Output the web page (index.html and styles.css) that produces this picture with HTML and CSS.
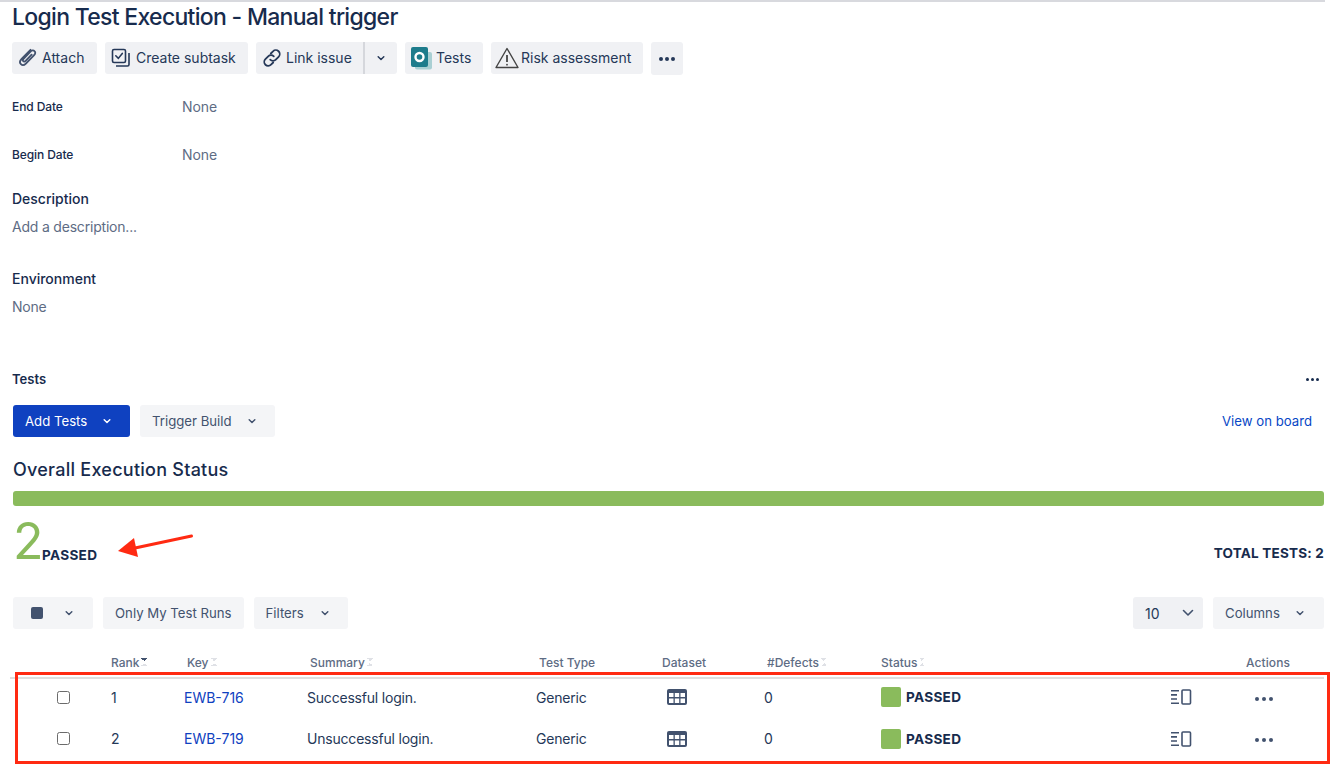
FILE: index.html
```html
<!DOCTYPE html>
<html lang="en">
<head>
<meta charset="UTF-8" />
<meta name="viewport" content="width=device-width, initial-scale=1" />
<title>Login Test Execution - Manual trigger</title>
<link rel="stylesheet" href="styles.css">
</head>
<body>
<div class="top-line"></div>
<main class="page">
  <h1 class="issue-title">Login Test Execution - Manual trigger</h1>

  <div class="toolbar">
    <a class="btn btn-attach">
      <svg class="icon" width="20" height="20" viewBox="0 0 20 20" fill="none" stroke="#42526e" stroke-width="1.8" stroke-linecap="round"><path d="M12.5 1.8 3.6 11c-1.8 1.8-2 3.9-.7 5.2 1.3 1.3 3.300 1.100 5-.6l8.200-8.400c1.400-1.400 1.500-3.100.4-4.100-1.100-1.100-2.700-.9-4 .4l-7 7.300c-.8.800-.9 1.800-.3 2.400.6.600 1.600.5 2.400-.3l6-6.200"/></svg>
      Attach
    </a>
    <a class="btn btn-subtask">
      <svg class="icon" width="20" height="20" viewBox="0 0 20 20" fill="none" stroke="#253858" stroke-width="1.6"><rect x="1.5" y="1.5" width="13" height="13" rx="1.5"/><path d="m4.8 7.800 2.500 2.600 4-5" stroke-linecap="round"/><path d="M18 5v11.500a1.500 1.500 0 0 1-1.500 1.500H5"/></svg>
      Create subtask
    </a>
    <div class="btn-split">
      <a class="btn btn-link">
        <svg class="icon" width="20" height="20" viewBox="0 0 20 20" fill="none" stroke="#253858" stroke-width="1.8" stroke-linecap="round"><path d="m8.8 5.500 2.200-2.200a3.900 3.900 0 0 1 5.600 5.500l-2.800 2.900a3.900 3.900 0 0 1-5.600 0"/><path d="m11.2 14.500-2.200 2.200a3.900 3.900 0 0 1-5.600-5.500l2.800-2.900a3.900 3.900 0 0 1 5.600 0"/></svg>
        Link issue
      </a>
      <a class="btn btn-caret">
        <svg width="10" height="10" viewBox="0 0 10 10" fill="none" stroke="#253858" stroke-width="1.5" stroke-linecap="round" stroke-linejoin="round"><path d="m2.2 3.800 2.800 2.700 2.800-2.700"/></svg>
      </a>
    </div>
    <a class="btn btn-tests">
      <svg class="icon" width="21" height="23" viewBox="0 0 21 23" fill="none"><rect x="4" y="5" width="17" height="17.5" rx="2" fill="#a9cfd3"/><rect x="0" y="0" width="17" height="20" rx="2" fill="#1d7c8c"/><circle cx="8.5" cy="10" r="4" fill="none" stroke="#fff" stroke-width="2.4"/></svg>
      Tests
    </a>
    <a class="btn btn-risk">
      <svg class="icon" width="26" height="24" viewBox="0 0 26 24" fill="none" stroke="#444" stroke-width="1.4" stroke-linejoin="round"><path d="M13 2.500 24 21.500H2z"/><path d="M13 9v7" stroke-width="1.8"/><circle cx="13" cy="18.7" r=".9" fill="#444" stroke="none"/></svg>
      Risk assessment
    </a>
    <a class="btn btn-more">
      <span class="dots"><i></i><i></i><i></i></span>
    </a>
  </div>

  <dl class="fields">
    <div class="field-row"><dt>End Date</dt><dd>None</dd></div>
    <div class="field-row"><dt>Begin Date</dt><dd>None</dd></div>
  </dl>

  <section class="text-block block-desc">
    <h2>Description</h2>
    <p>Add a description...</p>
  </section>
  <section class="text-block block-env">
    <h2>Environment</h2>
    <p>None</p>
  </section>

  <div class="tests-head">
    <h2>Tests</h2>
    <span class="dots dots-small"><i></i><i></i><i></i></span>
  </div>

  <div class="tests-actions">
    <a class="btn2 btn-primary">Add Tests
      <svg width="10" height="10" viewBox="0 0 10 10" fill="none" stroke="#fff" stroke-width="1.5" stroke-linecap="round" stroke-linejoin="round"><path d="m2.2 3.800 2.800 2.700 2.800-2.700"/></svg>
    </a>
    <a class="btn2 btn-trigger">Trigger Build
      <svg width="10" height="10" viewBox="0 0 10 10" fill="none" stroke="#42526e" stroke-width="1.5" stroke-linecap="round" stroke-linejoin="round"><path d="m2.2 3.800 2.800 2.700 2.800-2.700"/></svg>
    </a>
    <a class="board-link">View on board</a>
  </div>

  <h2 class="status-title">Overall Execution Status</h2>
  <div class="status-bar"></div>

  <div class="summary">
    <div class="summary-count">
      <span class="big-num">2</span>
      <span class="big-label">PASSED</span>
    </div>
    <span class="total">TOTAL TESTS: 2</span>
  </div>

  <div class="filters">
    <a class="btn2 btn-status">
      <span class="square"></span>
      <svg width="10" height="10" viewBox="0 0 10 10" fill="none" stroke="#42526e" stroke-width="1.5" stroke-linecap="round" stroke-linejoin="round"><path d="m2.2 3.800 2.800 2.700 2.800-2.700"/></svg>
    </a>
    <a class="btn2 btn-mine">Only My Test Runs</a>
    <a class="btn2 btn-filters">Filters
      <svg width="10" height="10" viewBox="0 0 10 10" fill="none" stroke="#42526e" stroke-width="1.5" stroke-linecap="round" stroke-linejoin="round"><path d="m2.2 3.800 2.800 2.700 2.800-2.700"/></svg>
    </a>
    <a class="btn2 btn-size">10
      <svg width="14" height="14" viewBox="0 0 14 14" fill="none" stroke="#42526e" stroke-width="1.6" stroke-linecap="round" stroke-linejoin="round"><path d="m2.5 4.500 4.500 4.500 4.500-4.500"/></svg>
    </a>
    <a class="btn2 btn-columns">Columns
      <svg width="10" height="10" viewBox="0 0 10 10" fill="none" stroke="#42526e" stroke-width="1.5" stroke-linecap="round" stroke-linejoin="round"><path d="m2.2 3.800 2.800 2.700 2.800-2.700"/></svg>
    </a>
  </div>

  <div class="runs">
    <div class="run-row run-head">
      <span class="c-check"></span>
      <span class="c-rank">Rank<i class="sort sort-on"></i></span>
      <span class="c-key">Key<i class="sort"></i></span>
      <span class="c-summary">Summary<i class="sort"></i></span>
      <span class="c-type">Test Type</span>
      <span class="c-data">Dataset</span>
      <span class="c-def">#Defects<i class="sort"></i></span>
      <span class="c-status">Status<i class="sort"></i></span>
      <span class="c-detail"></span>
      <span class="c-act">Actions</span>
    </div>
    <div class="run-row run-body run-first">
      <span class="c-check"><input type="checkbox" class="check"></span>
      <span class="c-rank">1</span>
      <span class="c-key"><a>EWB-716</a></span>
      <span class="c-summary">Successful login.</span>
      <span class="c-type">Generic</span>
      <span class="c-data">
        <svg width="22" height="18" viewBox="0 0 22 18"><rect x="1" y="1" width="20" height="16" rx="2" fill="#42526e"/><path d="M3 5h4.500v4H3zM8.800 5h4.400v4H8.800zM14.500 5H19v4h-4.500zM3 10.500h4.500V15H3zM8.800 10.500h4.400V15H8.800zM14.500 10.500H19V15h-4.500z" fill="#fff"/></svg>
      </span>
      <span class="c-def">0</span>
      <span class="c-status"><i class="status-box"></i><b>PASSED</b></span>
      <span class="c-detail">
        <svg width="22" height="16" viewBox="0 0 22 16" fill="none" stroke="#42526e" stroke-width="1.6"><path d="M1 1.800h8M1 5.900h6M1 10h6M1 14.200h8"/><rect x="12" y="1" width="8.5" height="14" rx="1"/></svg>
      </span>
      <span class="c-act"><span class="dots"><i></i><i></i><i></i></span></span>
    </div>
    <div class="run-row run-body">
      <span class="c-check"><input type="checkbox" class="check"></span>
      <span class="c-rank">2</span>
      <span class="c-key"><a>EWB-719</a></span>
      <span class="c-summary">Unsuccessful login.</span>
      <span class="c-type">Generic</span>
      <span class="c-data">
        <svg width="22" height="18" viewBox="0 0 22 18"><rect x="1" y="1" width="20" height="16" rx="2" fill="#42526e"/><path d="M3 5h4.500v4H3zM8.800 5h4.400v4H8.800zM14.500 5H19v4h-4.500zM3 10.500h4.500V15H3zM8.800 10.500h4.400V15H8.800zM14.500 10.500H19V15h-4.500z" fill="#fff"/></svg>
      </span>
      <span class="c-def">0</span>
      <span class="c-status"><i class="status-box"></i><b>PASSED</b></span>
      <span class="c-detail">
        <svg width="22" height="16" viewBox="0 0 22 16" fill="none" stroke="#42526e" stroke-width="1.6"><path d="M1 1.800h8M1 5.900h6M1 10h6M1 14.200h8"/><rect x="12" y="1" width="8.5" height="14" rx="1"/></svg>
      </span>
      <span class="c-act"><span class="dots"><i></i><i></i><i></i></span></span>
    </div>
  </div>
</main>

<!-- red annotations sitting over the screenshot -->
<svg class="note-arrow" width="80" height="26" viewBox="0 0 80 26"><path d="M74.500 3 18 15" stroke="#ff2a12" stroke-width="3" stroke-linecap="round"/><path d="M1 18 17 5l4 19z" fill="#ff2a12"/></svg>
<div class="note-box"></div>
</body>
</html>
```

FILE: styles.css
```css
* {
  box-sizing: border-box;
}
body {
  margin: 0;
  height: 767px;
  overflow: hidden;
  position: relative;
  background: #fff;
  font-family: Inter, "Liberation Sans", Arial, sans-serif;
  font-size: 14px;
  color: #172b4d;
}
.top-line {
  height: 2px;
  width: 1325px;
  background: #d8d9de;
}
.page {
  padding: 0 7px 0 12px;
}
.issue-title {
  margin: 0;
  height: 30px;
  font-size: 23px;
  line-height: 30px;
  font-weight: 500;
  letter-spacing: -0.7px;
}

/* top toolbar */
.toolbar {
  display: flex;
  gap: 8px;
  margin-top: 10px;
  height: 33px;
}
.btn {
  display: flex;
  align-items: center;
  height: 32px;
  background: #f0f1f4;
  border-radius: 3px;
  color: #253858;
  font-size: 14px;
  line-height: 30px;
  white-space: nowrap;
}
.btn .icon {
  flex-shrink: 0;
}
.btn-attach { width: 85px; padding-left: 6px; gap: 4px; }
.btn-subtask { width: 143px; padding-left: 6px; gap: 5px; }
.btn-split { display: flex; }
.btn-link { width: 109px; padding-left: 6px; gap: 4px; border-radius: 3px 0 0 3px; border-right: 2px solid #d5d7dc; }
.btn-caret { width: 32px; justify-content: center; border-radius: 0 3px 3px 0; }
.btn-tests { width: 78px; padding-left: 6px; gap: 4px; }
.btn-risk { width: 152px; padding-left: 3px; gap: 1px; }
.btn-more { width: 32px; height: 33px; justify-content: center; }

.dots {
  display: inline-flex;
  gap: 2px;
}
.dots i {
  width: 4px;
  height: 4px;
  border-radius: 50%;
  background: #253858;
}
.dots-small i { width: 3px; height: 3px; background: #172b4d; }

/* fields */
.fields {
  margin: 0;
  padding-top: 7px;
}
.field-row {
  display: flex;
  align-items: center;
  height: 48px;
}
.field-row dt {
  width: 170px;
  font-size: 12px;
  font-weight: 500;
  letter-spacing: -0.1px;
}
.field-row dd {
  margin: 0;
  color: #5e6c84;
  font-size: 14px;
  letter-spacing: -0.1px;
}
.text-block h2 {
  margin: 0;
  height: 20px;
  font-size: 14px;
  line-height: 20px;
  font-weight: 500;
}
.text-block p {
  margin: 8px 0 0;
  height: 20px;
  line-height: 20px;
  color: #5e6c84;
  letter-spacing: -0.2px;
}
.block-desc { margin-top: 11px; }
.block-env { margin-top: 32px; }

/* tests section */
.tests-head {
  display: flex;
  justify-content: space-between;
  align-items: center;
  margin-top: 52px;
  height: 20px;
  padding-right: 5px;
}
.tests-head h2 {
  margin: 0;
  font-size: 13px;
  font-weight: 600;
}
.tests-actions {
  display: flex;
  align-items: center;
  gap: 10px;
  margin-top: 16px;
  padding-left: 1px;
}
.btn2 {
  display: flex;
  align-items: center;
  height: 32px;
  border-radius: 3px;
  background: #f4f5f7;
  color: #42526e;
  font-size: 13.2px;
  white-space: nowrap;
}
.btn-primary {
  width: 117px;
  padding-left: 12px;
  gap: 15px;
  background: #0f41c0;
  color: #fff;
}
.btn-trigger {
  width: 135px;
  padding-left: 12px;
  gap: 15px;
}
.board-link {
  margin-left: auto;
  padding-right: 12px;
  color: #0747c6;
  font-size: 13.2px;
}
.status-title {
  margin: 21px 0 0 1px;
  height: 24px;
  font-size: 18px;
  line-height: 24px;
  font-weight: 500;
  letter-spacing: 0.25px;
}
.status-bar {
  margin: 9px 0 0 1px;
  height: 15px;
  background: #8abb5c;
  border-radius: 3px;
}
.summary {
  display: flex;
  justify-content: space-between;
  align-items: flex-end;
  height: 58px;
  margin-left: 1px;
}
.summary-count {
  display: flex;
  align-items: flex-end;
}
.big-num {
  font-size: 50px;
  line-height: 56px;
  font-weight: 400;
  color: #8abb5c;
  width: 29px;
  margin-bottom: -5px;
}
.big-label {
  font-size: 13.6px;
  font-weight: 700;
  line-height: 16px;
  letter-spacing: 0.3px;
  margin-bottom: 1px;
}
.total {
  font-size: 13.5px;
  font-weight: 700;
  letter-spacing: 0.2px;
  line-height: 16px;
  margin-bottom: 3px;
}

/* filters */
.filters {
  display: flex;
  gap: 10px;
  margin: 33px 0 0 1px;
}
.btn-status { width: 80px; padding-left: 18px; gap: 21px; }
.square {
  width: 12px;
  height: 12px;
  border-radius: 2px;
  background: #42526e;
}
.btn-mine { padding: 0 12px; }
.btn-filters { width: 94px; padding-left: 12px; gap: 16px; }
.btn-size {
  width: 70px;
  margin-left: auto;
  padding-left: 12px;
  gap: 21px;
  background: #f0f1f4;
  color: #253858;
  font-size: 14px;
}
.btn-columns { width: 111px; padding-left: 12px; gap: 15px; }

/* test runs table */
.runs {
  margin: 23px 0 0 -2px;
  width: 1314px;
}
.run-row {
  display: grid;
  grid-template-columns: 101px 73px 123px 229px 130px 98px 117px 289px 77px 1fr;
  align-items: center;
}
.run-head {
  height: 20px;
  font-size: 12px;
  font-weight: 500;
  color: #5e6c84;
  white-space: nowrap;
}
.run-head span {
  display: flex;
  align-items: center;
  gap: 2px;
}
.run-body {
  height: 41px;
  font-size: 14px;
  color: #253858;
}
.run-first {
  border-top: 2px solid #dfdfdf;
  margin: 5px 0 3px;
  height: 38px;
}
.run-head .c-key,
.run-head .c-summary,
.run-head .c-type,
.run-head .c-def { padding-left: 3px; }
.run-head .c-data { margin-left: -4px; }
.run-head .c-act { margin-left: -1px; letter-spacing: 0.1px; }
.run-body .c-summary,
.run-body .c-type { letter-spacing: -0.2px; }
.c-check {
  display: flex;
  padding-left: 47px;
}
.check {
  appearance: none;
  margin: 0;
  width: 13px;
  height: 13px;
  border: 1px solid #6b6b6b;
  border-radius: 2.5px;
  background: #fff;
}
.c-key a {
  color: #0f41c0;
}
.c-data svg,
.c-detail svg {
  display: block;
}
.c-act .dots {
  margin-left: 8px;
  gap: 3px;
  vertical-align: middle;
}
.c-act .dots i {
  background: #42526e;
}
.c-status {
  display: flex;
  align-items: center;
  gap: 5px;
}
.c-status b {
  font-weight: 700;
  font-size: 13.6px;
  letter-spacing: 0.3px;
  color: #172b4d;
}
.status-box {
  width: 20px;
  height: 20px;
  border-radius: 2px;
  background: #8abb5c;
}
.sort {
  display: inline-block;
  width: 6px;
  height: 9px;
  background:
    linear-gradient(45deg, transparent 50%, #dfe1e6 50%) 0 0 / 3px 3px no-repeat,
    linear-gradient(-45deg, transparent 50%, #dfe1e6 50%) 3px 0 / 3px 3px no-repeat,
    linear-gradient(135deg, transparent 50%, #dfe1e6 50%) 0 5px / 3px 3px no-repeat,
    linear-gradient(-135deg, transparent 50%, #dfe1e6 50%) 3px 5px / 3px 3px no-repeat;
}
.sort-on {
  background:
    linear-gradient(45deg, transparent 50%, #42526e 50%) 0 0 / 3px 3px no-repeat,
    linear-gradient(-45deg, transparent 50%, #42526e 50%) 3px 0 / 3px 3px no-repeat,
    linear-gradient(135deg, transparent 50%, #dfe1e6 50%) 0 5px / 3px 3px no-repeat,
    linear-gradient(-135deg, transparent 50%, #dfe1e6 50%) 3px 5px / 3px 3px no-repeat;
}

/* annotations */
.note-arrow {
  position: absolute;
  left: 117px;
  top: 533px;
}
.note-box {
  position: absolute;
  left: 15px;
  top: 672px;
  width: 1315px;
  height: 92px;
  border: 3px solid #ff2a12;
}
```
